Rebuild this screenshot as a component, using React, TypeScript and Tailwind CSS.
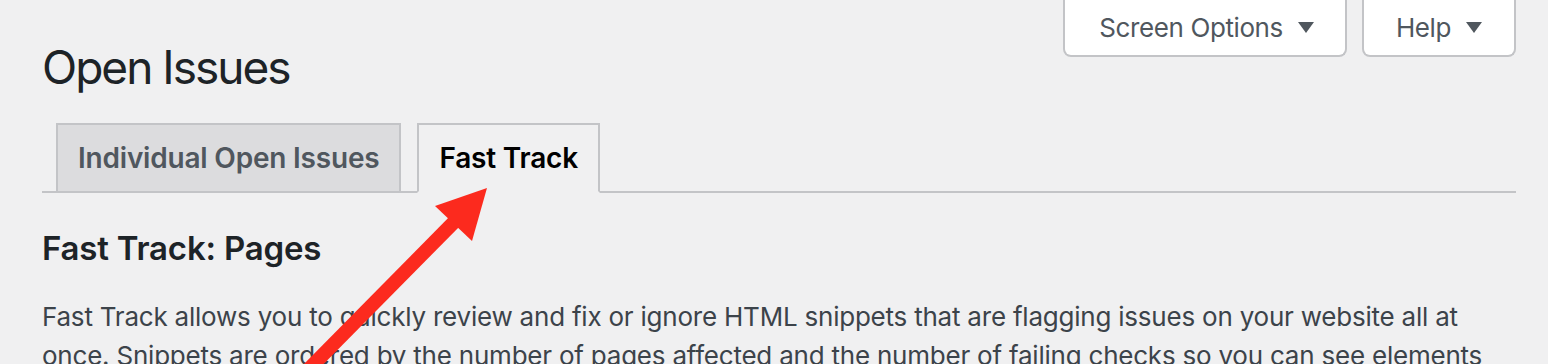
import React from 'react';

const font = { fontFamily: 'Inter, "Noto Sans", sans-serif' };

const Caret = () => (
  <svg width="16" height="12" viewBox="0 0 16 12" className="ml-[15px] shrink-0">
    <polygon points="0,0 16,0 8,11" fill="#50575e" />
  </svg>
);

export default function App() {
  return (
    <div className="relative w-[1548px] h-[364px] overflow-hidden bg-[#f0f0f1]" style={font}>
      {/* screen meta links */}
      <div className="absolute top-0 right-[32px] flex gap-[15px]">
        <button className="flex items-center h-[57px] pl-[34px] pr-[31px] bg-white border-2 border-t-0 border-[#c3c4c7] rounded-b-[8px] text-[26px] tracking-[-0.4px] text-[#50575e]">
          Screen Options
          <Caret />
        </button>
        <button className="flex items-center h-[57px] pl-[32px] pr-[32px] bg-white border-2 border-t-0 border-[#c3c4c7] rounded-b-[8px] text-[26px] tracking-[-0.4px] text-[#50575e]">
          Help
          <Caret />
        </button>
      </div>

      <div className="pl-[42px] pr-[32px]">
        <h1 className="pt-[37px] text-[46px] leading-[60px] font-normal tracking-[-2px] text-[#1d2327]">Open Issues</h1>

        {/* tabs */}
        <div className="mt-[26px] flex items-end border-b-2 border-[#c3c4c7] pl-[14px] gap-[16px]">
          <div className="h-[70px] -mb-[2px] px-[20px] flex items-center bg-[#dcdcde] border-2 border-[#c3c4c7] text-[28px] font-semibold tracking-[-0.2px] text-[#50575e]">
            Individual Open Issues
          </div>
          <div className="h-[70px] -mb-[2px] px-[20px] flex items-center bg-[#f0f0f1] border-2 border-b-[#f0f0f1] border-[#c3c4c7] text-[28px] font-semibold tracking-[-0.2px] text-black">
            Fast Track
          </div>
        </div>

        <h2 className="mt-[35px] text-[33px] leading-[40px] font-semibold tracking-[-0.2px] text-[#1d2327]">Fast Track: Pages</h2>

        <p className="mt-[29px] text-[26px] leading-[39px] tracking-[-0.22px] text-[#3c434a]">
          Fast Track allows you to quickly review and fix or ignore HTML snippets that are flagging issues on your website all at once. Snippets are ordered by the number of pages affected and the number of failing checks so you can see elements that appear most often first.
        </p>
      </div>

      {/* annotation arrow */}
      <svg className="absolute inset-0 pointer-events-none" width="1548" height="364" viewBox="0 0 1548 364">
        <line x1="298" y1="380" x2="462" y2="214" stroke="#fc2a1e" strokeWidth="14" />
        <polygon points="487,188 472,241 435,206" fill="#fc2a1e" />
      </svg>
    </div>
  );
}
